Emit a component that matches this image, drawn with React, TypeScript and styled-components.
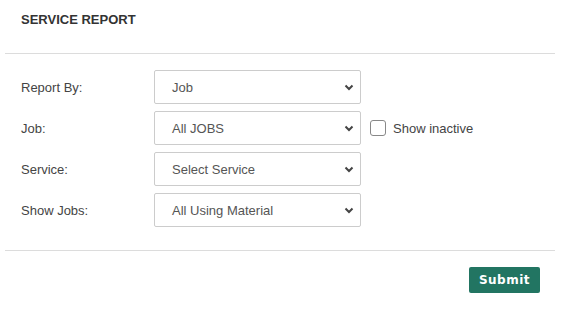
import React from 'react';
import styled, { createGlobalStyle } from 'styled-components';

const GlobalStyle = createGlobalStyle`
	html, body {
		margin: 0;
		padding: 0;
		background: #fff;
	}
	body {
		font-family: 'Liberation Sans', Arial, sans-serif;
		color: #333;
	}
`;

const Panel = styled.div`
	width: 577px;
	height: 317px;
	box-sizing: border-box;
	padding: 0 22px 0 5px;
	display: flex;
	flex-direction: column;
`;

const Header = styled.div`
	height: 38px;
	padding: 0 16px 15px;
	display: flex;
	align-items: center;
	font-size: 13px;
	font-weight: 700;
	color: #333;
	border-bottom: 1px solid #dcdcdc;
`;

const Form = styled.div`
	padding: 16px 16px 23px;
	display: flex;
	flex-direction: column;
	gap: 7px;
	border-bottom: 1px solid #dcdcdc;
`;

const Row = styled.div`
	display: flex;
	align-items: center;
	height: 34px;
`;

const Label = styled.label`
	width: 133px;
	font-size: 13px;
	color: #444;
`;

const SelectBox = styled.div`
	position: relative;
	width: 207px;
	height: 34px;
	box-sizing: border-box;
	border: 1px solid #ccc;
	border-radius: 2px;
	display: flex;
	align-items: center;
	padding-left: 17px;
	font-size: 13px;
	color: #555;
`;

const Chevron = styled.svg`
	position: absolute;
	right: 6px;
	top: 13px;
`;

const CheckWrap = styled.label`
	display: flex;
	align-items: center;
	margin-left: 9px;
	gap: 7px;
	font-size: 13px;
	color: #444;
`;

const CheckBox = styled.span`
	width: 14px;
	height: 14px;
	border: 1px solid #888;
	border-radius: 3px;
	background: #fff;
`;

const Footer = styled.div`
	display: flex;
	justify-content: flex-end;
	padding: 16px 15px 0;
`;

const SubmitButton = styled.button`
	width: 71px;
	height: 26px;
	border: none;
	border-radius: 2px;
	background: #227562;
	color: #fff;
	font-family: 'DejaVu Sans', Verdana, sans-serif;
	font-weight: 700;
	font-size: 12px;
	letter-spacing: 0.5px;
	cursor: pointer;
`;

const Select: React.FC<{ value: string }> = ({ value }) => (
	<SelectBox>
		{value}
		<Chevron width="10" height="7" viewBox="0 0 10 7">
			<path d="M1.5 1.5 L5 5 L8.5 1.5" fill="none" stroke="#444" strokeWidth="2" />
		</Chevron>
	</SelectBox>
);

const rows = [
	{ label: 'Report By:', value: 'Job' },
	{ label: 'Job:', value: 'All JOBS', inactive: true },
	{ label: 'Service:', value: 'Select Service' },
	{ label: 'Show Jobs:', value: 'All Using Material' },
];

export default function App() {
	return (
		<>
			<GlobalStyle />
			<Panel>
				<Header>SERVICE REPORT</Header>
				<Form>
					{rows.map((r) => (
						<Row key={r.label}>
							<Label>{r.label}</Label>
							<Select value={r.value} />
							{r.inactive && (
								<CheckWrap>
									<CheckBox />
									Show inactive
								</CheckWrap>
							)}
						</Row>
					))}
				</Form>
				<Footer>
					<SubmitButton>Submit</SubmitButton>
				</Footer>
			</Panel>
		</>
	);
}
